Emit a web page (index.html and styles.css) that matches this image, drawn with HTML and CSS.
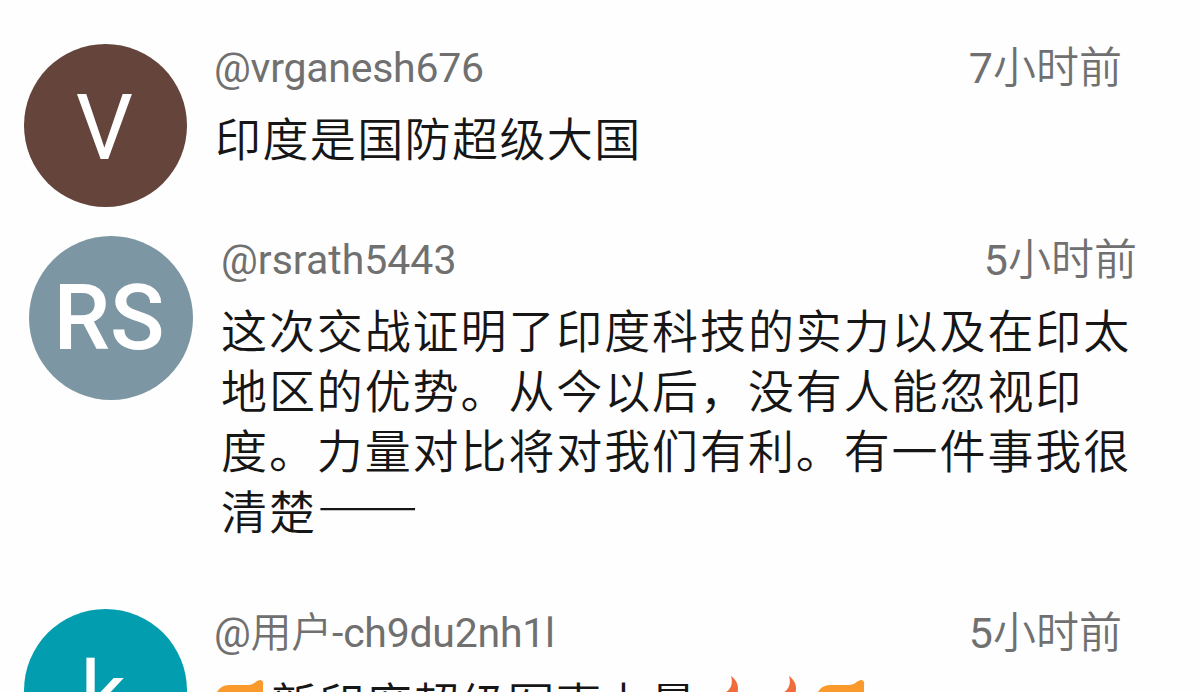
FILE: index.html
```html
<!DOCTYPE html>
<html lang="zh-CN">
<head>
    <meta charset="UTF-8">
    <meta name="viewport" content="width=device-width, initial-scale=1.0">
    <title>评论</title>
    <link rel="stylesheet" href="styles.css">
</head>
<body>

<div class="comments">
    <!-- First comment -->
    <div class="comment">
        <div class="avatar brown"><span>V</span></div>
        <div class="content">
            <div class="comment-header">
                <span class="user">@vrganesh676</span>
                <span class="time"><span class="num">7</span>小时前</span>
            </div>
            <p class="text tight">印度是国防超级大国</p>
        </div>
    </div>

    <!-- Second comment -->
    <div class="comment shifted">
        <div class="avatar grey"><span>RS</span></div>
        <div class="content">
            <div class="comment-header">
                <span class="user">@rsrath5443</span>
                <span class="time"><span class="num">5</span>小时前</span>
            </div>
            <p class="text">这次交战证明了印度科技的实力以及在印太<br>地区的优势。从今以后，没有人能忽视印<br>度。力量对比将对我们有利。有一件事我很<br>清楚<span class="dash">——</span></p>
        </div>
    </div>

    <!-- Third comment -->
    <div class="comment last">
        <div class="avatar teal"><span>k</span></div>
        <div class="content">
            <div class="comment-header">
                <span class="user">@<span class="cjk">用户</span>-ch9du2nh1l</span>
                <span class="time"><span class="num">5</span>小时前</span>
            </div>
            <p class="text tight emoji-text">
                <svg class="emoji flag" viewBox="0 0 56 50"><path d="M2 12 Q6 5 14 5 H33 C39 5 40 1 45 0 Q49 0 48 6 V34 Q40 34 36 40 H8 Q2 40 2 34 Z" fill="#fb9a2c"/></svg><span>新印度超级军事力量</span><svg class="emoji fire" viewBox="3 4 58 50"><path d="M36 0 C44 6 45 14 40 22 Q52 30 44 44 Q30 54 16 44 Q10 32 24 20 C34 16 39 10 36 0 Z" fill="#f06c3c"/></svg><svg class="emoji fire" viewBox="3 4 58 50"><path d="M36 0 C44 6 45 14 40 22 Q52 30 44 44 Q30 54 16 44 Q10 32 24 20 C34 16 39 10 36 0 Z" fill="#f06c3c"/></svg><svg class="emoji flag" viewBox="-2 0 56 50"><path d="M2 12 Q6 5 14 5 H33 C39 5 40 1 45 0 Q49 0 48 6 V34 Q40 34 36 40 H8 Q2 40 2 34 Z" fill="#fb9a2c"/></svg>
            </p>
        </div>
    </div>
</div>

</body>
</html>
```
FILE: styles.css
```css
/* Basic Reset */
* {
    margin: 0;
    padding: 0;
    box-sizing: border-box;
}
body {
    font-family: Roboto, 'Noto Sans CJK SC', sans-serif;
    background-color: #fefefe;
    color: #161616;
    height: 692px;
    overflow: hidden;
}

.comments {
    display: flex;
    flex-direction: column;
    height: 692px;
    overflow: hidden;
    padding: 44px 78px 0 24px;
}

/* Comment rows */
.comment {
    display: flex;
    gap: 28px;
    height: 192px;
    flex-shrink: 0;
}
.comment.shifted {
    height: 373px;
    margin: 0 -15px 0 5px;
}
.comment.last {
    height: 83px;
    overflow: hidden;
}
.content {
    flex: 1;
    min-width: 0;
}
.comment-header {
    display: flex;
    justify-content: space-between;
    height: 60px;
    line-height: 48px;
    color: #707070;
    white-space: nowrap;
}
.user {
    font-size: 41px;
    letter-spacing: -0.25px;
    margin-left: -1px;
}
.shifted .user {
    letter-spacing: 0;
    margin-left: 0;
}
.time {
    font-size: 43px;
    font-weight: 350;
}
.num {
    font-weight: 400;
}
.cjk {
    font-weight: 350;
}
.text {
    font-size: 46px;
    font-weight: 350;
    line-height: 60px;
    letter-spacing: 1.9px;
    margin-top: 6px;
    white-space: nowrap;
}
.tight {
    letter-spacing: 1.4px;
}
.dash {
    font-family: 'Noto Sans CJK SC', sans-serif;
    font-size: 51px;
    font-weight: 400;
    line-height: 1;
}

/* Avatars */
.avatar {
    display: flex;
    align-items: center;
    justify-content: center;
    width: 163px;
    height: 163px;
    flex-shrink: 0;
    border-radius: 50%;
    color: #fff;
    font-size: 90px;
    padding: 6px 2px 0 0;
}
.grey {
    background-color: #7d96a3;
    width: 164px;
    height: 164px;
    font-weight: 500;
    padding: 1px 4px 0 0;
}
.brown {
    background-color: #64443b;
}
.teal {
    background-color: #029eaf;
    padding: 9px 5px 0 0;
}

/* Emoji line */
.emoji-text {
    display: flex;
    align-items: center;
}
.emoji {
    height: 50px;
    flex-shrink: 0;
}
.flag {
    width: 56px;
}
.fire {
    width: 58px;
    overflow: visible;
}
```
